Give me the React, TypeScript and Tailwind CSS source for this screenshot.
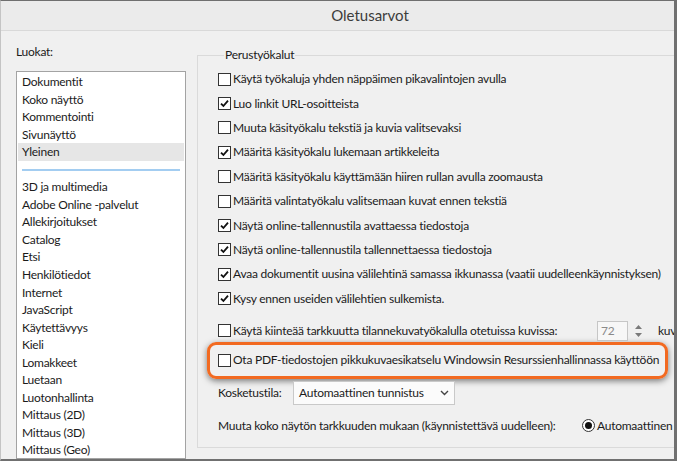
import * as React from 'react';

const categoriesTop = ['Dokumentit', 'Koko näyttö', 'Kommentointi', 'Sivunäyttö', 'Yleinen'];
const categoriesBottom = [
  '3D ja multimedia',
  'Adobe Online -palvelut',
  'Allekirjoitukset',
  'Catalog',
  'Etsi',
  'Henkilötiedot',
  'Internet',
  'JavaScript',
  'Käytettävyys',
  'Kieli',
  'Lomakkeet',
  'Luetaan',
  'Luotonhallinta',
  'Mittaus (2D)',
  'Mittaus (3D)',
  'Mittaus (Geo)',
];

const options = [
  { label: 'Käytä työkaluja yhden näppäimen pikavalintojen avulla', checked: false },
  { label: 'Luo linkit URL-osoitteista', checked: true },
  { label: 'Muuta käsityökalu tekstiä ja kuvia valitsevaksi', checked: false },
  { label: 'Määritä käsityökalu lukemaan artikkeleita', checked: true },
  { label: 'Määritä käsityökalu käyttämään hiiren rullan avulla zoomausta', checked: false },
  { label: 'Määritä valintatyökalu valitsemaan kuvat ennen tekstiä', checked: false },
  { label: 'Näytä online-tallennustila avattaessa tiedostoja', checked: true },
  { label: 'Näytä online-tallennustila tallennettaessa tiedostoja', checked: true },
  { label: 'Avaa dokumentit uusina välilehtinä samassa ikkunassa (vaatii uudelleenkäynnistyksen)', checked: true },
  { label: 'Kysy ennen useiden välilehtien sulkemista.', checked: true },
];

const Checkbox = ({ checked }: { checked: boolean }) => (
  <div className="w-[13px] h-[13px] shrink-0 border border-[#333333] bg-white flex items-center justify-center">
    {checked && (
      <svg width="9" height="9" viewBox="0 0 9 9">
        <path d="M1 4.6 L3.4 7 L8 1.6" fill="none" stroke="#111" strokeWidth="1.8" />
      </svg>
    )}
  </div>
);

const CheckRow = ({ label, checked }: { label: string; checked: boolean }) => (
  <div className="h-[24.4px] flex items-center gap-[2px] whitespace-nowrap">
    <Checkbox checked={checked} />
    <span>{label}</span>
  </div>
);

export default function App() {
  return (
    <div
      className="w-[677px] h-[461px] overflow-hidden flex flex-col bg-[#f0f0f0] border-t border-t-[#6f6f6f] border-l border-l-[#c4c4c4] border-r-[3px] border-r-[#707070] border-b-[2px] border-b-[#707070] text-[12px] tracking-[-0.25px] text-[#1b1b1b]"
      style={{ fontFamily: 'Lato, "Noto Sans", sans-serif' }}
    >
      <div className="h-[30px] shrink-0 bg-[#ebebeb] border-b border-[#d9d9d9] flex items-center justify-center pl-[65px] text-[15px] tracking-normal text-[#3c3c3c]">
        Oletusarvot
      </div>

      <div className="flex-1 flex min-h-0">
        <div className="w-[189px] shrink-0 pl-[15px] pt-[13px] flex flex-col">
          <div className="leading-[16px]">Luokat:</div>
          <div className="mt-[11px] w-[170px] flex-1 border border-[#a3a3a3] bg-white pt-[1.2px] overflow-hidden">
            {categoriesTop.map(c => (
              <div
                key={c}
                className={`h-[17.55px] mx-px pl-[4px] flex items-center ${c === 'Yleinen' ? 'bg-[#e6e6e6]' : ''}`}
              >
                {c}
              </div>
            ))}
            <div className="h-[17.55px] flex items-center px-[5px]">
              <div className="h-[2px] w-full bg-[#a3cdf1]" />
            </div>
            {categoriesBottom.map(c => (
              <div key={c} className="h-[17.55px] mx-px pl-[4px] flex items-center whitespace-nowrap">
                {c}
              </div>
            ))}
          </div>
        </div>

        <div className="flex-1 min-w-0 pl-[7px] pt-[16px]">
          <fieldset className="w-[520px] h-[401px] border border-[#dadada] pl-[20px]">
            <legend className="ml-[6px] px-[1px] leading-[16px]">Perustyökalut</legend>
            <div className="pt-[4px]">
              {options.map(o => (
                <CheckRow key={o.label} label={o.label} checked={o.checked} />
              ))}
            </div>

            <div className="mt-[8px] h-[24px] flex items-center whitespace-nowrap">
              <div className="w-[379px] flex items-center gap-[2px]">
                <Checkbox checked={false} />
                <span>Käytä kiinteää tarkkuutta tilannekuvatyökalulla otetuissa kuvissa:</span>
              </div>
              <div className="w-[31px] h-[20px] border border-[#c6c6c6] bg-[#f7f7f7] text-[#8a8a8a] pl-[3px] leading-[18px]">
                72
              </div>
              <div className="ml-[5px] w-[10px] h-[20px] flex flex-col items-center justify-center gap-[4px]">
                <svg width="7" height="4" viewBox="0 0 7 4">
                  <path d="M0 4 L3.5 0 L7 4 Z" fill="#7a7a7a" />
                </svg>
                <svg width="7" height="4" viewBox="0 0 7 4">
                  <path d="M0 0 L3.5 4 L7 0 Z" fill="#7a7a7a" />
                </svg>
              </div>
              <span className="ml-[15px]">kuvat/tuuma</span>
            </div>

            <div className="-mt-px -ml-[11px] w-[461px] h-[37px] border-[3px] border-[#f26a21] rounded-[9px] shadow-[0_2px_6px_rgba(0,0,0,0.5)] pl-[8px] flex items-center gap-[2px] whitespace-nowrap">
              <Checkbox checked={false} />
              <span>Ota PDF-tiedostojen pikkukuvaesikatselu Windowsin Resurssienhallinnassa käyttöön</span>
            </div>

            <div className="mt-[2px] h-[24px] flex items-center whitespace-nowrap">
              <span className="w-[75px]">Kosketustila:</span>
              <div className="w-[162px] h-[24px] border border-[#c9c9c9] bg-[#fbfbfb] flex items-center justify-between pl-[5px] pr-[5px]">
                <span>Automaattinen tunnistus</span>
                <svg width="9" height="6" viewBox="0 0 9 6">
                  <path d="M1 1 L4.5 4.5 L8 1" fill="none" stroke="#444" strokeWidth="1.4" />
                </svg>
              </div>
            </div>

            <div className="mt-[11px] h-[20px] flex items-center whitespace-nowrap">
              <span className="w-[364px]">Muuta koko näytön tarkkuuden mukaan (käynnistettävä uudelleen):</span>
              <div className="w-[13px] h-[13px] rounded-full border border-[#333] bg-white flex items-center justify-center">
                <div className="w-[7px] h-[7px] rounded-full bg-[#111]" />
              </div>
              <span className="ml-[2px]">Automaattinen tunnistus</span>
            </div>
          </fieldset>
        </div>
      </div>
    </div>
  );
}
